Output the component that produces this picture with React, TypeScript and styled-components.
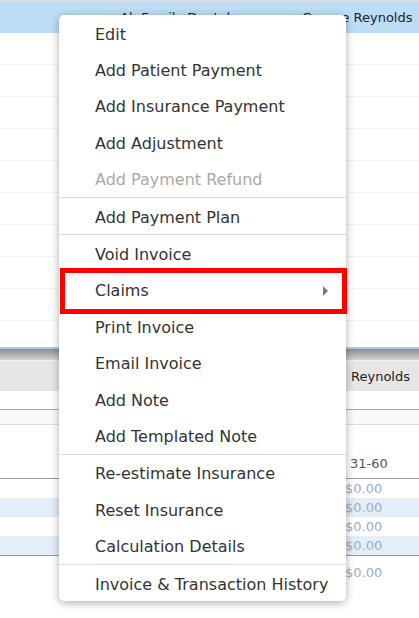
import React from 'react';
import styled, { createGlobalStyle } from 'styled-components';

const GlobalStyle = createGlobalStyle`
  html, body {
    margin: 0;
    padding: 0;
    background: #ffffff;
  }
  body {
    font-family: 'DejaVu Sans', Verdana, sans-serif;
    width: 419px;
    height: 618px;
    overflow: hidden;
  }
`;

const Page = styled.div`
  position: relative;
  width: 419px;
  height: 618px;
  overflow: hidden;
  background: #fff;
  border-top: 2px solid #dcdcdc;
  box-sizing: border-box;
`;

const SelectedRow = styled.div`
  display: flex;
  align-items: center;
  height: 31px;
  background: #bddcf6;
  font-size: 13px;
  color: #222;
`;

const Cell = styled.span<{ width: number }>`
  flex: 0 0 ${({ width }) => width}px;
  white-space: nowrap;
`;

const GridRow = styled.div`
  height: 31px;
  border-bottom: 1px solid #f2f2f2;
`;

const Spacer = styled.div<{ h: number }>`
  height: ${({ h }) => h}px;
`;

const PanelTop = styled.div`
  height: 13px;
  border-top: 2px solid #a8cbe9;
  background: linear-gradient(#8c8c8c, #d2d2d2);
  box-sizing: border-box;
`;

const HeaderRow = styled.div`
  display: flex;
  align-items: center;
  height: 30px;
  border-top: 1px solid #f0f0f0;
  background: #e6e6e6;
  font-size: 13px;
  color: #222;
`;

const Rule = styled.div<{ color: string }>`
  height: 1px;
  background: ${({ color }) => color};
`;

const SubHeader = styled.div`
  height: 14px;
  background: #f9f9f9;
`;

const AgingHead = styled.div`
  display: flex;
  align-items: flex-end;
  height: 53px;
  padding-bottom: 7px;
  box-sizing: border-box;
  font-size: 13px;
  color: #555;
`;

const MoneyRow = styled.div<{ shaded?: boolean }>`
  display: flex;
  align-items: center;
  height: 19px;
  background: ${({ shaded }) => (shaded ? '#e3eef9' : '#fff')};
  font-size: 13px;
  color: #9aaec6;
`;

const TotalRow = styled.div`
  display: flex;
  align-items: center;
  height: 32px;
  font-size: 13px;
  color: #9aaec6;
`;

const Menu = styled.ul`
  position: absolute;
  top: 13px;
  left: 59px;
  width: 287px;
  margin: 0;
  padding: 0;
  list-style: none;
  background: #fff;
  border-radius: 5px;
  box-shadow: 0 2px 9px rgba(0, 0, 0, 0.32);
`;

const Item = styled.li<{ disabled?: boolean }>`
  position: relative;
  display: flex;
  align-items: center;
  height: 36.4px;
  padding: 2px 0 0 36px;
  box-sizing: border-box;
  font-size: 16px;
  color: ${({ disabled }) => (disabled ? '#a9a9a9' : '#333')};
  white-space: nowrap;
`;

const Divider = styled.li`
  height: 1px;
  background: #dedede;
`;

const Arrow = styled.span`
  position: absolute;
  right: 18px;
  top: 50%;
  margin-top: -4px;
  width: 0;
  height: 0;
  border-top: 5px solid transparent;
  border-bottom: 5px solid transparent;
  border-left: 5px solid #7a7a7a;
`;

const Highlight = styled.span`
  position: absolute;
  top: -4px;
  bottom: -6px;
  left: 1px;
  right: -1px;
  border: 5px solid #ff0000;
  pointer-events: none;
`;

type Entry = { label?: string; disabled?: boolean; sub?: boolean; marked?: boolean; divider?: boolean };

const entries: Entry[] = [
  { label: 'Edit' },
  { label: 'Add Patient Payment' },
  { label: 'Add Insurance Payment' },
  { label: 'Add Adjustment' },
  { label: 'Add Payment Refund', disabled: true },
  { divider: true },
  { label: 'Add Payment Plan' },
  { divider: true },
  { label: 'Void Invoice' },
  { label: 'Claims', sub: true, marked: true },
  { label: 'Print Invoice' },
  { label: 'Email Invoice' },
  { label: 'Add Note' },
  { label: 'Add Templated Note' },
  { divider: true },
  { label: 'Re-estimate Insurance' },
  { label: 'Reset Insurance' },
  { label: 'Calculation Details' },
  { divider: true },
  { label: 'Invoice & Transaction History' },
];

const App: React.FC = () => (
  <>
    <GlobalStyle />
    <Page>
      <SelectedRow>
        <Cell width={120} />
        <Cell width={182}>Ab Family Dental</Cell>
        <Cell width={117}>George Reynolds</Cell>
      </SelectedRow>
      {Array.from({ length: 9 }).map((_, i) => (
        <GridRow key={i} />
      ))}
      <Spacer h={26} />
      <PanelTop />
      <HeaderRow>
        <Cell width={351} />
        <Cell width={68}>Reynolds</Cell>
      </HeaderRow>
      <Spacer h={18} />
      <Rule color="#aaaaaa" />
      <SubHeader />
      <Rule color="#dddddd" />
      <AgingHead>
        <Cell width={350} />
        <Cell width={69}>31-60</Cell>
      </AgingHead>
      <Rule color="#999999" />
      {[false, true, false, true].map((shaded, i) => (
        <MoneyRow key={i} shaded={shaded}>
          <Cell width={345} />
          <Cell width={74}>$0.00</Cell>
        </MoneyRow>
      ))}
      <Rule color="#999999" />
      <TotalRow>
        <Cell width={345} />
        <Cell width={74}>$0.00</Cell>
      </TotalRow>

      <Menu>
        {entries.map((e, i) =>
          e.divider ? (
            <Divider key={i} />
          ) : (
            <Item key={i} disabled={e.disabled}>
              {e.label}
              {e.sub && <Arrow />}
              {e.marked && <Highlight />}
            </Item>
          ),
        )}
      </Menu>
    </Page>
  </>
);

export default App;
